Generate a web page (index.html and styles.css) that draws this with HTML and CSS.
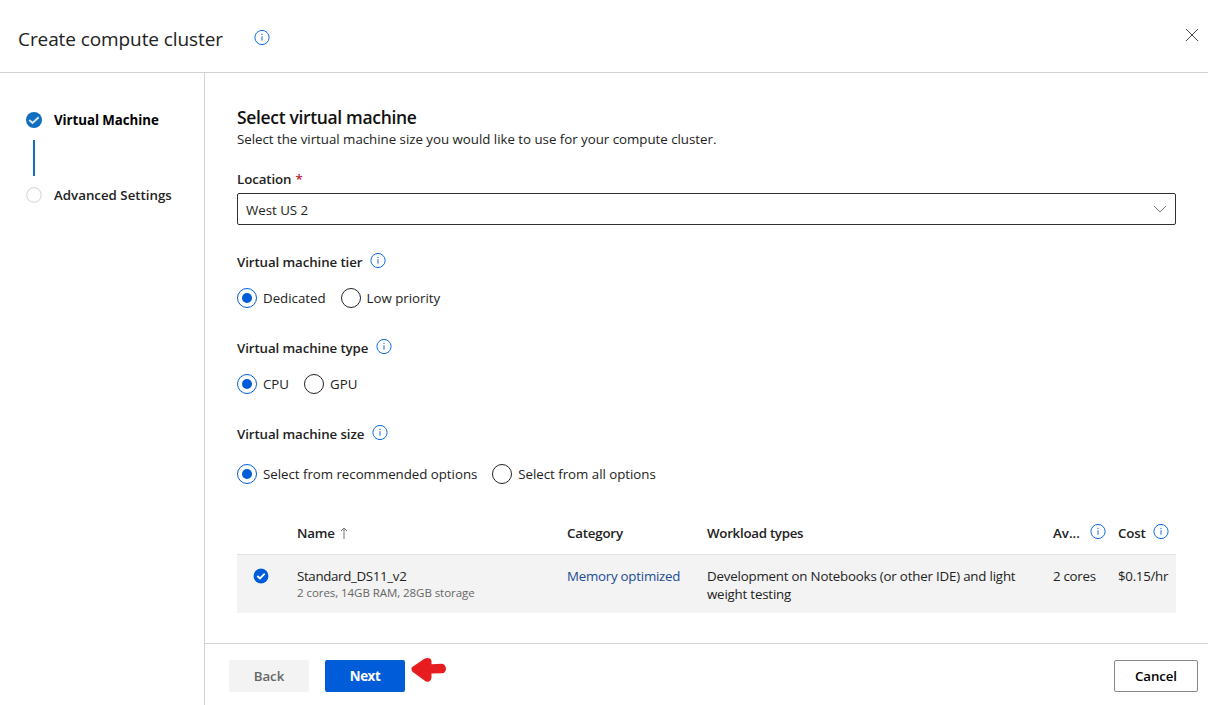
FILE: index.html
```html
<!DOCTYPE html>
<html lang="en">
<head>
<meta charset="utf-8">
<title>Create compute cluster</title>
<link rel="stylesheet" href="styles.css">
</head>
<body>
<svg class="defs" width="0" height="0">
  <symbol id="info" viewBox="0 0 16 16"><circle cx="8" cy="7.500" r="7.1" fill="none" stroke="currentColor"/><path d="M8 6.200V10.700" stroke="currentColor" stroke-width="1"/><circle cx="8" cy="4.400" r=".65" fill="currentColor"/></symbol>
</svg>
<header class="header">
  <h1 class="title">Create compute cluster</h1>
  <svg class="info"><use href="#info"/></svg>
  <svg class="close" viewBox="0 0 14 14"><path d="M1 1L13 13M13 1L1 13" stroke="#444" stroke-width="1"/></svg>
</header>
<div class="body">
  <nav class="steps">
    <div class="step current"><svg class="dot" viewBox="0 0 16 16"><circle cx="8" cy="8" r="8" fill="#106ebe"/><path d="M3.300 8L6.500 11L12.700 5.200" fill="none" stroke="#d8e9f7" stroke-width="1.9"/></svg><span>Virtual Machine</span></div>
    <div class="connector"></div>
    <div class="step"><svg class="dot" viewBox="0 0 16 16"><circle cx="8" cy="8" r="7.3" fill="#fff" stroke="#dcdcdc" stroke-width="1.3"/></svg><span>Advanced Settings</span></div>
  </nav>
  <div class="panel">
    <main class="content">
      <h2 class="heading">Select virtual machine</h2>
      <p class="lead">Select the virtual machine size you would like to use for your compute cluster.</p>
      <div class="label location">Location <span class="required">*</span></div>
      <div class="select"><span>West US 2</span><svg class="chevron" viewBox="0 0 14 8"><path d="M1 1L7 7L13 1" fill="none" stroke="#777"/></svg></div>

      <div class="label tier"><span>Virtual machine tier</span><svg class="info"><use href="#info"/></svg></div>
      <div class="options">
        <label class="option"><i class="radio on"></i><span>Dedicated</span></label>
        <label class="option"><i class="radio"></i><span>Low priority</span></label>
      </div>
      <div class="label type"><span>Virtual machine type</span><svg class="info"><use href="#info"/></svg></div>
      <div class="options">
        <label class="option"><i class="radio on"></i><span>CPU</span></label>
        <label class="option"><i class="radio"></i><span>GPU</span></label>
      </div>
      <div class="label size"><span>Virtual machine size</span><svg class="info"><use href="#info"/></svg></div>
      <div class="options sizes">
        <label class="option"><i class="radio on"></i><span>Select from recommended options</span></label>
        <label class="option"><i class="radio"></i><span>Select from all options</span></label>
      </div>

      <div class="table">
        <div class="row head">
          <span></span>
          <span class="name-head"><span>Name</span><svg class="sort" viewBox="0 0 8 12"><path d="M4 12V1M1 4L4 1L7 4" fill="none" stroke="#777"/></svg></span>
          <span class="category-head">Category</span>
          <span class="workload-head">Workload types</span>
          <span class="with-info"><span class="avail">Av...</span><svg class="info"><use href="#info"/></svg></span>
          <span class="with-info"><span class="cost">Cost</span><svg class="info"><use href="#info"/></svg></span>
        </div>
        <div class="row item">
          <svg class="check" viewBox="0 0 16 16"><circle cx="8" cy="8" r="8" fill="#fff"/><circle cx="8" cy="8" r="7.5" fill="#015cda"/><path d="M4.3 8L7 10.5L11.7 5.7" fill="none" stroke="#fff" stroke-width="1.8"/></svg>
          <span><span class="vm">Standard_DS11_v2</span><span class="spec">2 cores, 14GB RAM, 28GB storage</span></span>
          <span class="link">Memory optimized</span>
          <span class="workload">Development on Notebooks (or other IDE) and light<br>weight testing</span>
          <span class="cores">2 cores</span>
          <span class="price">$0.15/hr</span>
        </div>
      </div>
    </main>
    <footer class="footer">
      <button class="button back">Back</button>
      <button class="button next">Next</button>
      <svg class="arrow" viewBox="0 0 36 26"><path d="M.5 12C0 11 1.500 9.500 3.500 8.500L13 2C16 .3 20.500 .5 20.500 4.500V7.200L31 6.700C36 7 36.500 16 31 16.300L20.500 16.600V20C20.500 24.500 16.500 26 13.500 23.500L2.500 15.500C1 14.500 .5 13.500 .5 12Z" fill="#e71c1f"/></svg>
      <button class="button cancel">Cancel</button>
    </footer>
  </div>
</div>
</body>
</html>
```
FILE: styles.css
```css
* { box-sizing: border-box; }
body { margin: 0; width: 1208px; height: 705px; overflow: hidden; display: flex; flex-direction: column; background: #fff; color: #222; font: 13.3px/20px "Open Sans", "Noto Sans", sans-serif; letter-spacing: -0.02px; }
h1, h2, p { margin: 0; }
svg { display: block; flex: none; }
span { white-space: nowrap; }
.defs { position: absolute; }
.header { height: 73px; border-bottom: 1px solid #d2d2d2; display: flex; align-items: flex-start; padding: 0 9px 0 18px; }
.title { width: 236px; padding-top: 25px; font-size: 19px; line-height: 28px; font-weight: 400; letter-spacing: -0.09px; }
.info { width: 16px; height: 16px; color: #0f6be0; }
.header .info { margin-top: 30px; }
.close { width: 14px; height: 14px; margin: 28px 0 0 auto; }
.body { flex: 1; display: flex; min-height: 0; }
.steps { width: 205px; border-right: 1px solid #d2d2d2; padding: 37px 0 0 26px; font-weight: 600; letter-spacing: 0; }
.step { display: flex; align-items: center; gap: 12px; height: 20px; }
.current { color: #000; font-weight: 700; letter-spacing: -0.06px; }
.dot { width: 16px; height: 16px; }
.connector { width: 2px; height: 36px; margin: 10px 0 9px 7px; background: #106ebe; }
.panel { flex: 1; display: flex; flex-direction: column; }
.content { height: 570px; padding: 33px 32px 0; }
.heading { font-size: 17.5px; line-height: 22px; font-weight: 600; color: #111; letter-spacing: -0.34px; }
.lead { line-height: 20px; margin-top: 1px; }
.label { height: 20px; display: flex; align-items: center; gap: 8px; font-weight: 600; letter-spacing: -0.1px; }
.label .info { margin-top: -3px; }
.location { margin-top: 20px; gap: 4px; }
.required { color: #b4232a; }
.select { height: 32px; margin-top: 4px; border: 1px solid #323130; border-radius: 2px; display: flex; align-items: center; justify-content: space-between; padding: 1px 8px 0; }
.chevron { width: 14px; height: 8px; margin-top: -2px; }
.tier { margin-top: 27px; }
.options { display: flex; gap: 15px; height: 20px; margin-top: 16px; }
.option { display: flex; align-items: center; gap: 6px; }
.radio { width: 20px; height: 20px; border: 1px solid #222; border-radius: 50%; display: grid; place-items: center; }
.on { border-color: #015cda; }
.on::after { content: ""; width: 10px; height: 10px; border-radius: 50%; background: #015cda; }
.type, .size { margin-top: 30px; }
.sizes { margin-top: 20px; }
.sizes .option { letter-spacing: -0.03px; }
.table { margin-top: 28px; }
.row { display: grid; grid-template-columns: 60px 270px 140px 346px 65px 58px; }
.head { height: 42px; padding-top: 11px; font-weight: 600; letter-spacing: -0.2px; }
.name-head { display: flex; gap: 5px; }
.workload-head { letter-spacing: -0.27px; }
.avail { letter-spacing: 0; }
.sort { width: 8px; height: 12px; margin-top: 4px; }
.with-info { display: flex; justify-content: space-between; }
.with-info .info { margin: 1px 0 0; }
.with-info:nth-child(5) .info { margin-right: 12px; }
.with-info:last-child .info { margin-right: 7px; }
.item { height: 59px; border-top: 1px solid #e1e1e1; background: #f3f3f3; padding-top: 12px; }
.check { width: 16px; height: 16px; margin: 1px 0 0 16px; }
.vm, .spec { display: block; }
.vm { line-height: 19px; letter-spacing: -0.33px; }
.spec { font-size: 11.5px; line-height: 14px; color: #666; letter-spacing: -0.06px; }
.link { color: #204d94; line-height: 18px; letter-spacing: -0.24px; }
.workload { line-height: 18px; letter-spacing: -0.19px; }
.cores, .price { line-height: 18px; letter-spacing: -0.28px; }
.footer { flex: 1; border-top: 1px solid #d2d2d2; display: flex; align-items: flex-start; padding: 16px 10px 0 24px; }
.button { height: 32px; border: 0; border-radius: 2px; font: 600 13.3px "Open Sans", sans-serif; letter-spacing: -0.1px; padding: 0; }
.back { width: 80px; background: #f3f3f3; color: #666; }
.next { width: 80px; margin-left: 16px; background: #015cda; color: #fff; font-weight: 700; letter-spacing: -0.4px; }
.arrow { width: 36px; height: 26px; margin: -3px 0 0 6px; }
.cancel { width: 84px; margin-left: auto; border: 1px solid #8a8886; background: #fff; color: #000; }
```
